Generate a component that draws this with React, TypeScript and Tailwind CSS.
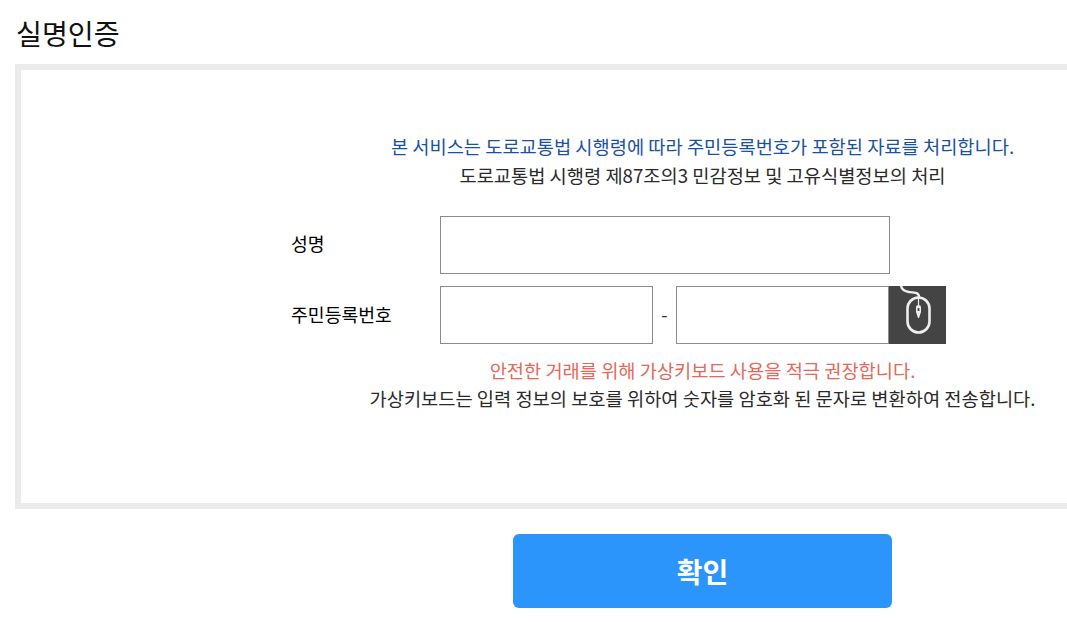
const font = "font-['Noto_Sans_CJK_KR','Noto_Sans',sans-serif]"

function MouseIcon() {
  return (
    <svg viewBox="0 0 57 58" className="h-[58px] w-[57px]" fill="none" stroke="#eeeeee">
      <path d="M12 0 C13 4 16 5.5 20 6 C26 6.5 30 6.5 30 11" strokeWidth="2.4" />
      <rect x="18.5" y="11.5" width="22" height="35" rx="11" strokeWidth="2.6" />
      <path d="M29.5 12 V19" strokeWidth="1.2" />
      <path d="M27 21 Q27 19 29.5 19 Q32 19 32 21 V26 L30 32 H29 L27 26 Z" fill="#eeeeee" stroke="none" />
      <path d="M28.6 22 H30.4 V25 H28.6 Z" fill="#444444" stroke="none" />
    </svg>
  )
}

export default function App() {
  return (
    <div className={`h-[623px] w-[1067px] overflow-hidden bg-white ${font}`}>
      <h1 className="pl-4 pt-[13px] text-[28.2px] leading-[40px] text-[#111]">실명인증</h1>

      <div className="ml-[15px] mt-[11px] h-[445px] w-[1375px] border-[6px] border-[#ebebeb] pt-[61px]">
        <div className="text-center text-[18.7px] leading-[29px]">
          <p className="text-[#1a529f]">본 서비스는 도로교통법 시행령에 따라 주민등록번호가 포함된 자료를 처리합니다.</p>
          <p className="text-[#2a2a2a]">도로교통법 시행령 제87조의3 민감정보 및 고유식별정보의 처리</p>
        </div>

        {/* form */}
        <div className="mx-auto mt-[27px] w-[823px] text-[18.3px] text-black">
          <div className="flex items-center">
            <label className="w-[149px] -translate-y-px">성명</label>
            <input className="h-[58px] w-[450px] border border-[#8c8c8c] bg-white" />
          </div>
          <div className="mt-3 flex items-center">
            <label className="w-[149px]">주민등록번호</label>
            <input className="h-[58px] w-[213px] border border-[#8c8c8c] bg-white" />
            <span className="w-[23px] text-center text-[#333]">-</span>
            <input className="h-[58px] w-[213px] border border-[#8c8c8c] bg-white" />
            <button className="h-[58px] w-[57px] bg-[#444444]">
              <MouseIcon />
            </button>
          </div>
        </div>

        <div className="mt-[12px] text-center text-[18.7px] leading-[28px]">
          <p className="text-[#e5695a]">안전한 거래를 위해 가상키보드 사용을 적극 권장합니다.</p>
          <p className="text-[#2a2a2a]">가상키보드는 입력 정보의 보호를 위하여 숫자를 암호화 된 문자로 변환하여 전송합니다.</p>
        </div>
      </div>

      <div className="ml-[15px] mt-[25px] flex w-[1375px] justify-center">
        <button className="h-[74px] w-[379px] rounded-md bg-[#2b95fb] text-[28px] font-bold text-white">확인</button>
      </div>
    </div>
  )
}
